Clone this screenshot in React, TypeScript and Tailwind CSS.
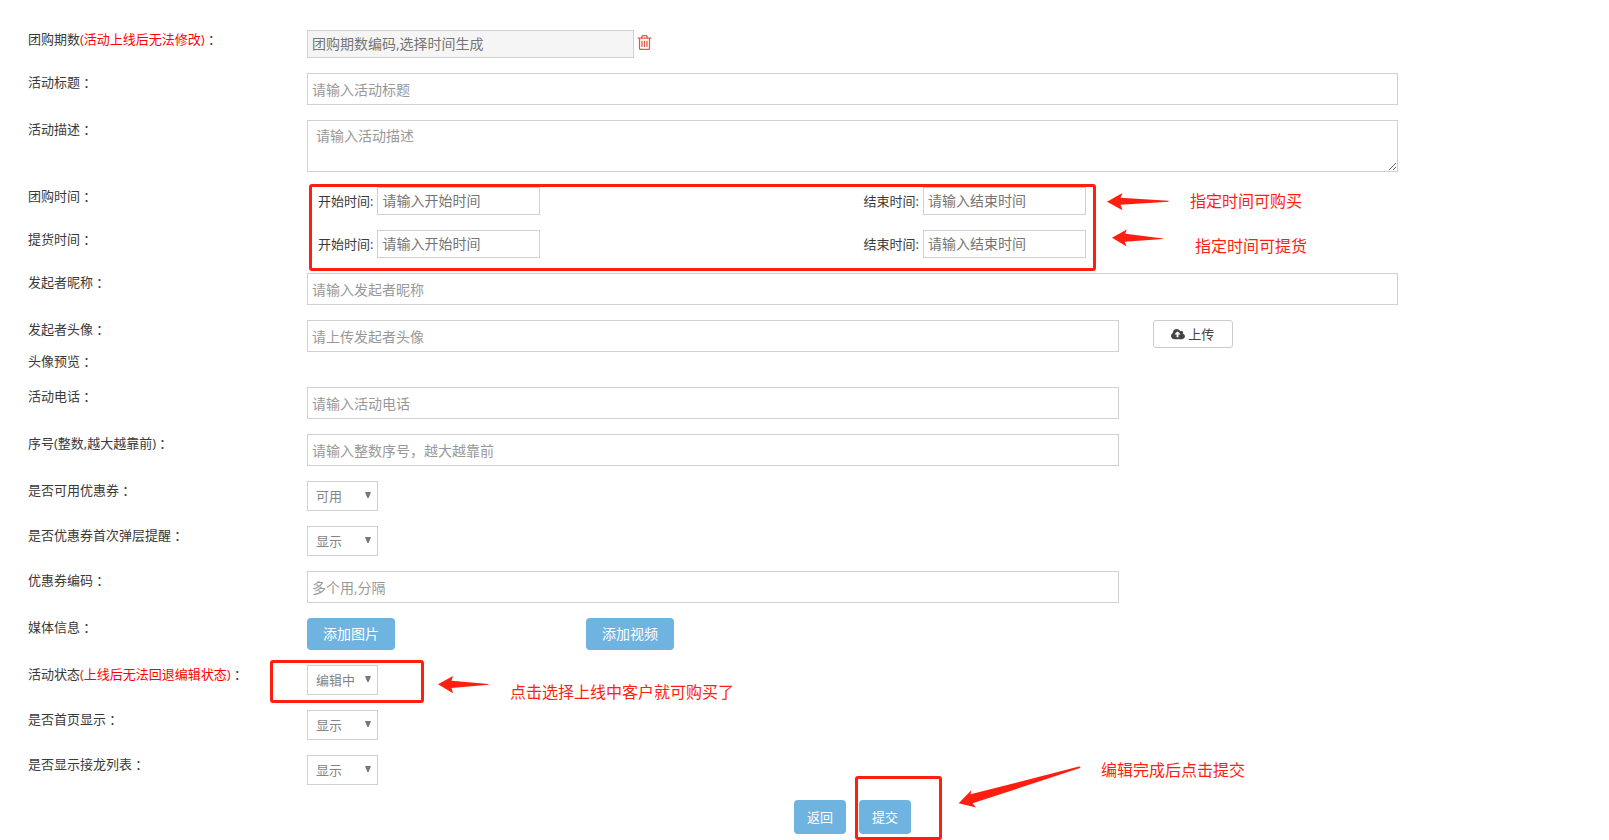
import React from 'react';

const box =
  'block border border-[#d0d0d0] bg-white text-sm leading-5 placeholder:opacity-100 outline-none rounded-none';
const tall = 'h-8 px-1 text-[#858585] placeholder:text-[#999]';
const blueButton =
  'rounded bg-[#6fb3e0] text-white leading-5 flex items-center justify-center';
const mark = 'absolute pointer-events-none';

function Colon() {
  return (
    <span className="align-[-1px] font-['Noto_Sans_CJK_TC',sans-serif] leading-none">：</span>
  );
}

type RowProps = {
  id?: string;
  label: string;
  note?: string;
  tight?: boolean;
  children?: React.ReactNode;
};

function Row({ id, label, note, tight, children }: RowProps) {
  return (
    <div
      className={`grid min-h-5 grid-cols-[279px_minmax(0,1fr)] items-start ${tight ? '' : 'mb-[15px]'}`}
    >
      <label htmlFor={id} className="h-[18px] text-[13px] leading-[18px] text-[#393939] whitespace-nowrap">
        {label}
        {note && <span className="text-[#ff0000]">{note}</span>}
        <Colon />
      </label>
      <div className="relative">{children}</div>
    </div>
  );
}

function Choice({ id, options }: { id: string; options: string[] }) {
  return (
    <div className="relative w-[71px]">
      <select
        id={id}
        className="block h-[30px] w-full appearance-none border border-[#d0d0d0] bg-white pl-2 pr-4 text-[13px] leading-5 text-[#858585] outline-none"
      >
        {options.map((o) => (
          <option key={o}>{o}</option>
        ))}
      </select>
      <svg className="pointer-events-none absolute right-[7px] top-[11px] h-[6px] w-[6px]" viewBox="0 0 6 6" fill="#777">
        <path d="M0 0h6L3.6 6H2.4z" />
      </svg>
    </div>
  );
}

function TimeRange({ id }: { id: string }) {
  const cells = [
    { key: 'start', label: '开始时间:', hint: '请输入开始时间' },
    { key: 'end', label: '结束时间:', hint: '请输入结束时间' },
  ];
  return (
    <div className="grid grid-cols-2">
      {cells.map((c) => (
        <div key={c.key} className="flex items-center gap-1 pl-[11px]">
          <label htmlFor={`${id}-${c.key}`} className="whitespace-nowrap text-[13px] leading-5 text-[#393939]">
            {c.label}
          </label>
          <input
            id={`${id}-${c.key}`}
            placeholder={c.hint}
            className={`${box} h-7 w-[163px] px-1 pb-[2px] text-[#858585] placeholder:text-[#757575]`}
          />
        </div>
      ))}
    </div>
  );
}

export default function App() {
  return (
    <form
      onSubmit={(e) => e.preventDefault()}
      className="min-w-[1200px] bg-white pb-[7px] pl-7 pr-[211px] pt-[30px] font-['Open_Sans','Noto_Sans_CJK_SC',sans-serif]"
    >
      <Row id="period" label="团购期数" note="(活动上线后无法修改)">
        <div className="flex items-start gap-[3px]">
          <input
            id="period"
            readOnly
            placeholder="团购期数编码,选择时间生成"
            className="block h-7 w-[327px] border border-[#d0d0d0] bg-[#f5f5f5] px-1 pb-[2px] text-sm leading-5 text-[#757575] outline-none placeholder:text-[#757575] placeholder:opacity-100"
          />
          <button type="button" aria-label="删除" className="pt-1">
            <svg className="h-[17px] w-[15px]" viewBox="128 64 1536 1664" fill="#dd5a43">
              <path d="M704 736v576q0 14-9 23t-23 9h-64q-14 0-23-9t-9-23v-576q0-14 9-23t23-9h64q14 0 23 9t9 23zm256 0v576q0 14-9 23t-23 9h-64q-14 0-23-9t-9-23v-576q0-14 9-23t23-9h64q14 0 23 9t9 23zm256 0v576q0 14-9 23t-23 9h-64q-14 0-23-9t-9-23v-576q0-14 9-23t23-9h64q14 0 23 9t9 23zm128 724v-948h-896v948q0 22 7 40.5t14.5 27 10.5 8.5h832q3 0 10.5-8.5t14.5-27 7-40.5zm-672-1076h448l-48-117q-7-9-17-11h-317q-10 2-17 11zm928 32v64q0 14-9 23t-23 9h-96v948q0 83-47 143.5t-113 60.5h-832q-66 0-113-58.5t-47-141.5v-952h-96q-14 0-23-9t-9-23v-64q0-14 9-23t23-9h309l70-167q15-37 54-63t79-26h320q40 0 79 26t54 63l70 167h309q14 0 23 9t9 23z" />
            </svg>
          </button>
        </div>
      </Row>

      <Row id="title" label="活动标题">
        <input id="title" placeholder="请输入活动标题" className={`${box} ${tall} w-full`} />
      </Row>

      <Row id="desc" label="活动描述">
        <textarea
          id="desc"
          placeholder="请输入活动描述"
          className={`${box} h-[52px] w-full resize border-[#c4c4c4] px-2 py-[5px] text-[#858585] placeholder:text-[#999]`}
        />
      </Row>

      <Row id="buy-start" label="团购时间">
        <TimeRange id="buy" />
        <div className={`${mark} -top-[3px] left-[2px] h-[87px] w-[787px] rounded-[3px] border-[3px] border-[#ff1e10]`} />
        <svg className={`${mark} left-[800px] top-[5px] h-5 w-[62px]`} viewBox="0 0 62 20" fill="#ff1e10">
          <path d="M0 9.700L15.500 1L13.500 5.700L61.500 8.700V9.700L13.500 12.700L15.500 18.300Z" />
        </svg>
        <span className={`${mark} left-[883px] top-[2px] whitespace-nowrap text-base leading-6 text-[#ff1e10]`}>
          指定时间可购买
        </span>
      </Row>

      <Row id="pick-start" label="提货时间">
        <TimeRange id="pick" />
        <svg className={`${mark} -top-[2px] left-[805px] h-5 w-[52px]`} viewBox="0 0 52 20" fill="#ff1e10">
          <path d="M0 9.700L14.700 1.400L13.300 5.700L51 10.400V11.100L12.700 13.700L14.700 18.400Z" />
        </svg>
        <span className={`${mark} left-[888px] top-1 whitespace-nowrap text-base leading-6 text-[#ff1e10]`}>
          指定时间可提货
        </span>
      </Row>

      <Row id="nick" label="发起者昵称">
        <input id="nick" placeholder="请输入发起者昵称" className={`${box} ${tall} w-full`} />
      </Row>

      <Row id="avatar" label="发起者头像" tight>
        <div className="flex items-start gap-[34px]">
          <input id="avatar" placeholder="请上传发起者头像" className={`${box} ${tall} w-[74.4%]`} />
          <button
            type="button"
            className="flex h-7 w-20 items-center justify-center gap-[3px] rounded-[3px] border border-[#ccc] bg-white text-[13px] leading-5 text-[#444]"
          >
            <svg className="h-[13px] w-[14px]" viewBox="-64 0 1920 1792" fill="#444">
              <path d="M1216 864q0-14-9-23l-352-352q-9-9-23-9t-23 9l-351 351q-10 12-10 24 0 14 9 23t23 9h224v352q0 13 9.500 22.500t22.500 9.500h192q13 0 22.500-9.500t9.500-22.500v-352h224q13 0 22.500-9.500t9.500-22.500zm640 288q0 159-112.500 271.500t-271.500 112.500h-1088q-185 0-316.500-131.500t-131.500-316.500q0-130 70-240t188-165q-2-30-2-43 0-212 150-362t362-150q156 0 285.500 87t188.500 231q71-62 166-62 106 0 181 75t75 181q0 76-41 138 130 31 213.500 135.500t83.500 238.500z" />
            </svg>
            上传
          </button>
        </div>
      </Row>

      <Row label="头像预览" />

      <Row id="phone" label="活动电话">
        <input id="phone" placeholder="请输入活动电话" className={`${box} ${tall} w-[74.4%]`} />
      </Row>

      <Row id="order" label="序号(整数,越大越靠前)">
        <input id="order" placeholder="请输入整数序号，越大越靠前" className={`${box} ${tall} w-[74.4%]`} />
      </Row>

      <Row id="coupon" label="是否可用优惠券">
        <Choice id="coupon" options={['可用', '不可用']} />
      </Row>

      <Row id="popup" label="是否优惠券首次弹层提醒">
        <Choice id="popup" options={['显示', '隐藏']} />
      </Row>

      <Row id="codes" label="优惠券编码">
        <input id="codes" placeholder="多个用,分隔" className={`${box} ${tall} w-[74.4%]`} />
      </Row>

      <Row id="add-image" label="媒体信息">
        <div className="grid grid-cols-[279px_88px]">
          <button id="add-image" type="button" className={`${blueButton} h-8 w-[88px] text-sm`}>
            添加图片
          </button>
          <button type="button" className={`${blueButton} h-8 w-[88px] text-sm`}>
            添加视频
          </button>
        </div>
      </Row>

      <Row id="status" label="活动状态" note="(上线后无法回退编辑状态)">
        <Choice id="status" options={['编辑中', '上线中']} />
        <div className={`${mark} -left-[37px] -top-[5px] h-[43px] w-[154px] rounded-[3px] border-[3px] border-[#ff1e10]`} />
        <svg className={`${mark} left-[131px] top-[10px] h-5 w-[52px]`} viewBox="0 0 52 20" fill="#ff1e10">
          <path d="M0 9.300L15 1L13.500 5.700L50.500 9V9.700L13.500 13L15 18.300Z" />
        </svg>
        <span className={`${mark} left-[203px] top-[15px] whitespace-nowrap text-base leading-6 text-[#ff1e10]`}>
          点击选择上线中客户就可购买了
        </span>
      </Row>

      <Row id="home" label="是否首页显示">
        <Choice id="home" options={['显示', '隐藏']} />
      </Row>

      <Row id="chain" label="是否显示接龙列表">
        <Choice id="chain" options={['显示', '隐藏']} />
      </Row>

      <div className="relative ml-[766px] flex gap-[13px]">
        <button type="button" className={`${blueButton} h-[34px] w-[52px] text-[13px]`}>
          返回
        </button>
        <button type="submit" className={`${blueButton} h-[34px] w-[52px] text-[13px]`}>
          提交
        </button>
        <div className={`${mark} -top-6 left-[61px] h-16 w-[87px] rounded-[3px] border-[3px] border-[#ff1e10]`} />
        <svg className={`${mark} -top-[34px] left-[164px] h-[43px] w-[124px]`} viewBox="0 0 124 43" fill="#ff1e10">
          <path d="M.7 37.300L13.300 24.300L12.600 28.300L121 .6L122.500 1L122 2L14.600 37.300L18 41.600Z" />
        </svg>
        <span className={`${mark} -top-[42px] left-[307px] whitespace-nowrap text-base leading-6 text-[#ff1e10]`}>
          编辑完成后点击提交
        </span>
      </div>
    </form>
  );
}
